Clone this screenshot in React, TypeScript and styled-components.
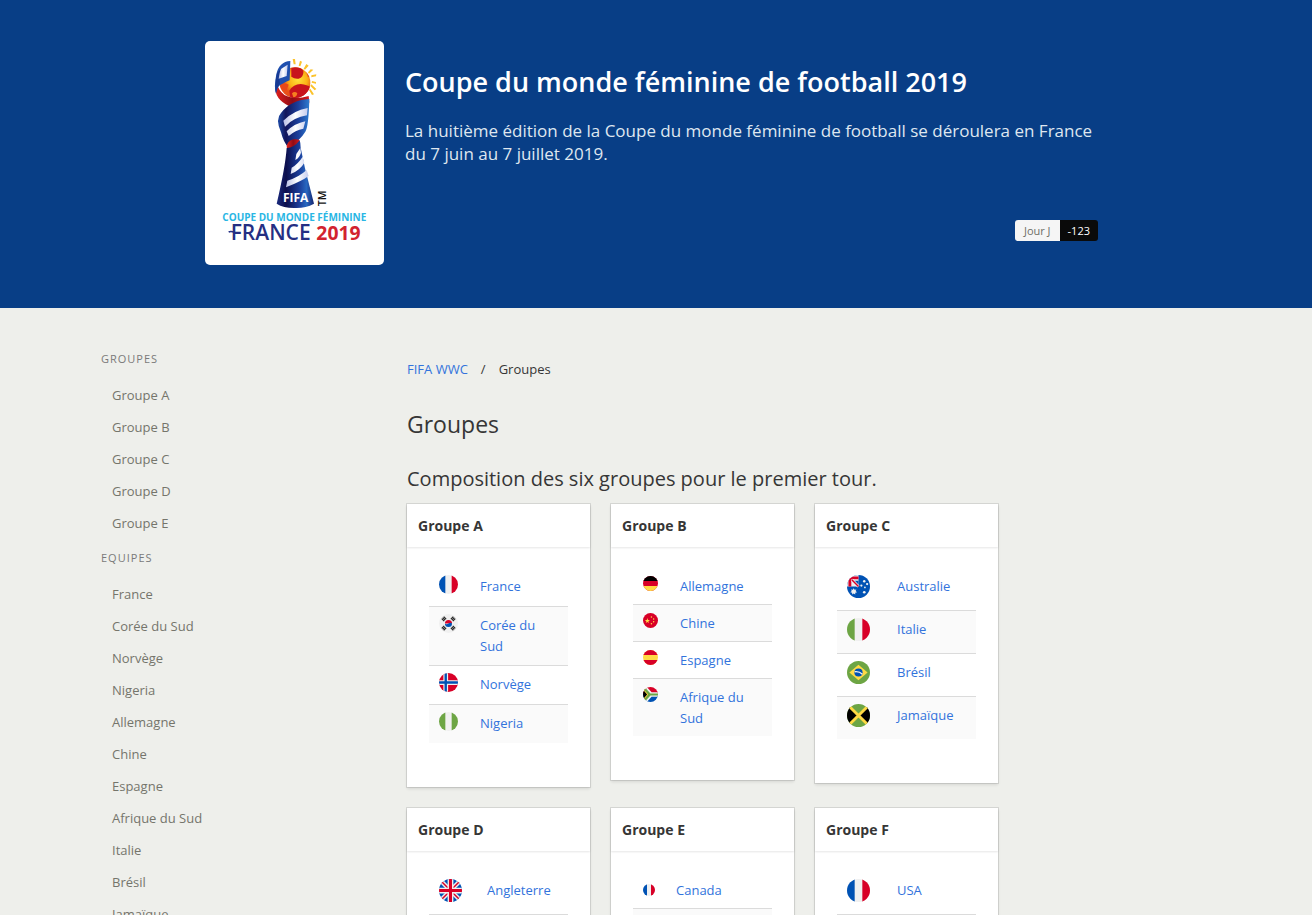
import React from "react";
import styled, { createGlobalStyle } from "styled-components";

const GlobalStyle = createGlobalStyle`
  *, *::before, *::after { box-sizing: border-box; }
  html { background: #eeefeb; }
  body {
    margin: 0;
    font-family: "Segoe UI", "Open Sans", "Noto Sans", sans-serif;
    font-size: 14px;
    line-height: 21px;
    color: #363636;
  }
  h1, h2, h3, p, ul { margin: 0; padding: 0; font-weight: 400; }
  ul { list-style: none; }
  a { color: #3273dc; text-decoration: none; }
`;

const Hero = styled.header`
  background: #083e86;
  padding: 41px 20px 43px;
`;

const HeroInner = styled.div`
  max-width: 902px;
  margin: 0 auto;
  display: flex;
  gap: 21px;
`;

const LogoCard = styled.div`
  flex: none;
  width: 179px;
  height: 224px;
  background: #fff;
  border-radius: 5px;
  overflow: hidden;
  svg { display: block; }
`;

const HeroBody = styled.div`
  flex: 1;
  display: flex;
  flex-direction: column;
  padding: 24px 9px 24px 0;
`;

const Title = styled.h1`
  color: #fff;
  font-size: 27px;
  font-weight: 600;
  line-height: 34px;
`;

const Subtitle = styled.p`
  margin-top: 20px;
  color: #dfe7f0;
  font-size: 17px;
  line-height: 23px;
`;

const Countdown = styled.div`
  align-self: flex-end;
  margin-top: auto;
  display: flex;
  border-radius: 3px;
  overflow: hidden;
`;

const Tag = styled.span<{ $dark?: boolean }>`
  padding: 0 ${(p) => (p.$dark ? 8 : 9)}px;
  font-size: 11px;
  line-height: 21px;
  background: ${(p) => (p.$dark ? "#0a0a0a" : "#f5f5f5")};
  color: ${(p) => (p.$dark ? "#fff" : "#6f6f66")};
`;

const Page = styled.div`
  max-width: 1130px;
  margin: 0 auto;
  padding: 40px 10px 20px;
  display: flex;
`;

const Sidebar = styled.nav`
  flex: none;
  width: 306px;
`;

const MenuLabel = styled.h2`
  font-size: 11px;
  line-height: 22px;
  letter-spacing: 1px;
  text-transform: uppercase;
  color: #7a7a7a;
`;

const MenuList = styled.ul`
  padding: 9px 0 8px;
`;

const MenuLink = styled.a`
  display: block;
  padding: 0 11px;
  font-size: 13px;
  line-height: 32px;
  color: #75756b;
`;

const Main = styled.main`
  flex: 1;
  min-width: 0;
`;

const Breadcrumb = styled.nav`
  margin-top: 11px;
  display: flex;
  gap: 13px;
  font-size: 13px;
`;

const Heading = styled.h2`
  margin-top: 28px;
  font-size: 23px;
  line-height: 33px;
`;

const Lead = styled.p`
  margin-top: 23px;
  font-size: 20px;
  line-height: 30px;
`;

const Cards = styled.div`
  margin-top: 10px;
  max-width: 591px;
  display: grid;
  grid-template-columns: repeat(3, minmax(0, 1fr));
  align-items: start;
  gap: 21px;
`;

const Card = styled.section`
  background: #fff;
  box-shadow: 0 2px 3px rgba(10, 10, 10, 0.1), 0 0 0 1px rgba(10, 10, 10, 0.1);
`;

const CardTitle = styled.h3`
  padding: 11px;
  font-size: 14px;
  font-weight: 700;
  line-height: 21px;
  box-shadow: 0 1px 2px rgba(10, 10, 10, 0.1);
`;

const CardBody = styled.div`
  padding: 21px 22px 44px;
`;

const Table = styled.table`
  width: 100%;
  border-collapse: separate;
  border-spacing: 0;
  table-layout: fixed;
  tr:nth-child(even) { background: #fafafa; }
  tr:not(:last-child) td { border-bottom: 1px solid #dbdbdb; }
`;

const FlagCell = styled.td<{ $width: number; $top: number; $height: number }>`
  box-sizing: content-box;
  width: ${(p) => p.$width - 10}px;
  height: ${(p) => p.$height - p.$top}px;
  padding: ${(p) => p.$top}px 0 0 10px;
  vertical-align: top;
  svg { display: block; border-radius: 50%; }
`;

const NameCell = styled.td<{ $bottom: number }>`
  padding: 8px 10px ${(p) => p.$bottom}px;
  vertical-align: top;
  font-size: 13px;
`;

const BLUE = "#0052b4";
const RED = "#d80027";
const GREEN = "#6da544";
const YELLOW = "#ffda44";
const WHITE = "#f0f0f0";

const bars = (a: string, b: string, c: string) => (
  <>
    <rect width="24" height="24" fill={b} />
    <rect width="8" height="24" fill={a} />
    <rect x="16" width="8" height="24" fill={c} />
  </>
);

const bands = (a: string, b: string, c: string) => (
  <>
    <rect width="24" height="24" fill={b} />
    <rect width="24" height="8" fill={a} />
    <rect y="16" width="24" height="8" fill={c} />
  </>
);

const flags: Record<string, React.ReactNode> = {
  fr: bars(BLUE, WHITE, RED),
  it: bars(GREEN, WHITE, RED),
  ng: bars(GREEN, WHITE, GREEN),
  de: bands("#000", RED, YELLOW),
  es: bands(RED, YELLOW, RED),
  nl: bands("#a2001d", WHITE, BLUE),
  ar: bands("#338af3", WHITE, "#338af3"),
  kr: (
    <>
      <rect width="24" height="24" fill={WHITE} />
      <path d="M7.500 12a4.500 4.500 0 0 1 9 0z" fill={RED} />
      <path d="M7.500 12a4.500 4.500 0 0 0 9 0q-2-2-4.500 0t-4.500 0z" fill={BLUE} />
      <g stroke="#222" strokeWidth="4.400" strokeDasharray="1.400 .4">
        <path d="M4.500 8L8 4.500M16 4.500L19.500 8M4.500 16L8 19.500M16 19.500l3.500-3.500" />
      </g>
    </>
  ),
  no: (
    <>
      <rect width="24" height="24" fill={RED} />
      <path d="M8.500 0v24M0 12h24" stroke={WHITE} strokeWidth="6" />
      <path d="M8.500 0v24M0 12h24" stroke={BLUE} strokeWidth="3" />
    </>
  ),
  cn: (
    <>
      <rect width="24" height="24" fill={RED} />
      <path d="M7 8l1 3h3.200l-2.600 2 1 3L7 14.200 4.400 16l1-3-2.600-2H6z" fill={YELLOW} />
      <g fill={YELLOW}>
        <circle cx="13.500" cy="6.500" r="1.200" />
        <circle cx="17" cy="9.500" r="1.200" />
        <circle cx="17" cy="14" r="1.200" />
        <circle cx="13.500" cy="17" r="1.200" />
      </g>
    </>
  ),
  za: (
    <>
      <rect width="24" height="12" fill={RED} />
      <rect y="12" width="24" height="12" fill={BLUE} />
      <path d="M2 1l10 11L2 23M11 12h13" stroke={WHITE} strokeWidth="7.500" fill="none" />
      <path d="M0 1l10 11L0 23z" fill="#000" />
      <path d="M0 3l8 9-8 9" stroke={YELLOW} strokeWidth="2" fill="none" />
      <path d="M1 1l10 11L1 23M11 12h13" stroke={GREEN} strokeWidth="3.500" fill="none" />
    </>
  ),
  au: (
    <>
      <rect width="24" height="24" fill={BLUE} />
      <rect width="12" height="12" fill={WHITE} />
      <path d="M0 3h12M3 0v12" stroke={RED} strokeWidth="3" />
      <path d="M6 6h6v6z" fill={BLUE} />
      <path d="M5 5l7 7" stroke={WHITE} strokeWidth="3" />
      <path d="M5 5l7 7" stroke={RED} strokeWidth="1.500" />
      <g fill={WHITE}>
        <path d="M7 13.800l.9 1.700 1.900-.4-.8 1.700 1.500 1.200-1.900.4v2L7 19.200l-1.600 1.200v-2l-1.900-.4L5 16.800l-.8-1.700 1.900.4z" />
        <circle cx="18" cy="6.500" r="1.300" />
        <circle cx="15" cy="11" r="1.200" />
        <circle cx="21" cy="9.500" r="1.200" />
        <circle cx="18.700" cy="13" r=".9" />
        <circle cx="18" cy="18" r="1.400" />
      </g>
    </>
  ),
  br: (
    <>
      <rect width="24" height="24" fill={GREEN} />
      <path d="M12 4l9.500 8L12 20l-9.500-8z" fill={YELLOW} />
      <circle cx="12" cy="12" r="4.300" fill={BLUE} />
      <path d="M8 11.200q5-.6 8 2.600" stroke={WHITE} strokeWidth="1.400" fill="none" />
    </>
  ),
  jm: (
    <>
      <rect width="24" height="24" fill={GREEN} />
      <path d="M0 0l12 12L0 24zM24 0L12 12l12 12z" fill="#000" />
      <path d="M2 2l20 20M22 2L2 22" stroke={YELLOW} strokeWidth="3" />
    </>
  ),
  gb: (
    <>
      <rect width="24" height="24" fill={BLUE} />
      <path d="M0 0l24 24M24 0L0 24" stroke={WHITE} strokeWidth="4.500" />
      <path d="M0 0l24 24M24 0L0 24" stroke={RED} strokeWidth="1.500" />
      <path d="M12 0v24M0 12h24" stroke={WHITE} strokeWidth="6" />
      <path d="M12 0v24M0 12h24" stroke={RED} strokeWidth="3.200" />
    </>
  ),
};

interface Group {
  name: string;
  flagSize: number;
  flagTop: number;
  flagWidth: number;
  rowHeight: number;
  teams: [string, string][];
}

const groups: Group[] = [
  {
    name: "Groupe A", flagSize: 19, flagTop: 7, flagWidth: 41, rowHeight: 38,
    teams: [["fr", "France"], ["kr", "Corée du Sud"], ["no", "Norvège"], ["ng", "Nigeria"]],
  },
  {
    name: "Groupe B", flagSize: 15, flagTop: 8, flagWidth: 37, rowHeight: 36,
    teams: [["de", "Allemagne"], ["cn", "Chine"], ["es", "Espagne"], ["za", "Afrique du Sud"]],
  },
  {
    name: "Groupe C", flagSize: 23, flagTop: 7, flagWidth: 50, rowHeight: 42,
    teams: [["au", "Australie"], ["it", "Italie"], ["br", "Brésil"], ["jm", "Jamaïque"]],
  },
  {
    name: "Groupe D", flagSize: 23, flagTop: 7, flagWidth: 48, rowHeight: 42,
    teams: [["gb", "Angleterre"], ["ar", "Argentine"]],
  },
  {
    name: "Groupe E", flagSize: 12, flagTop: 12, flagWidth: 33, rowHeight: 36,
    teams: [["fr", "Canada"], ["nl", "Pays-Bas"]],
  },
  {
    name: "Groupe F", flagSize: 23, flagTop: 7, flagWidth: 50, rowHeight: 42,
    teams: [["fr", "USA"], ["fr", "Suède"]],
  },
];

const menus = [
  { label: "Groupes", items: ["Groupe A", "Groupe B", "Groupe C", "Groupe D", "Groupe E"] },
  {
    label: "Equipes",
    items: [
      "France", "Corée du Sud", "Norvège", "Nigeria", "Allemagne", "Chine",
      "Espagne", "Afrique du Sud", "Italie", "Brésil", "Jamaïque",
    ],
  },
];

const Trophy = () => (
  <svg width="179" height="224" viewBox="15 15 537 672" role="img" aria-label="FIFA Coupe du monde féminine France 2019">
    <defs>
      <linearGradient id="base" x1="0" x2="1">
        <stop offset="0" stopColor="#1c2c80" />
        <stop offset=".25" stopColor="#0c0e4c" />
        <stop offset=".6" stopColor="#1b3c98" />
        <stop offset=".8" stopColor="#2868c0" />
        <stop offset="1" stopColor="#15246e" />
      </linearGradient>
      <linearGradient id="band" x1="0" x2="1">
        <stop offset="0" stopColor="#1f4ba6" />
        <stop offset=".25" stopColor="#12155a" />
        <stop offset=".65" stopColor="#1c3f9c" />
        <stop offset="1" stopColor="#2e7cd0" />
      </linearGradient>
      <linearGradient id="stripe" x1="0" x2="1">
        <stop offset="0" stopColor="#b9bfe6" />
        <stop offset=".5" stopColor="#ffffff" />
        <stop offset="1" stopColor="#c6cdee" />
      </linearGradient>
      <radialGradient id="ball" cx=".6" cy=".4">
        <stop offset="0" stopColor="#ffe23a" />
        <stop offset=".6" stopColor="#fbb216" />
        <stop offset="1" stopColor="#e8501a" />
      </radialGradient>
      <linearGradient id="ribbon" x1="0" x2="1">
        <stop offset="0" stopColor="#e0201c" />
        <stop offset=".5" stopColor="#8e0c16" />
        <stop offset="1" stopColor="#d41a1c" />
      </linearGradient>
      <clipPath id="ballClip"><circle cx="285" cy="140" r="46" /></clipPath>
    </defs>
    <g fill="#fbc32c">
      <path d="M278 69l7 0 2 16-6 0zM300 74l6 3-5 14-5-2zM319 84l7 5-11 12-4-3zM332 100l8 1-13 12-3-4zM334 118l15-3-1 6-14 3zM336 135l12 3v5l-13-3zM334 145l15 14-5 4-13-13zM331 158l11 17-6 2-9-15z" />
    </g>
    <circle cx="285" cy="140" r="46" fill="url(#ball)" />
    <g clipPath="url(#ballClip)">
      <path d="M274 96q24-8 36 8 2 18-14 24-12 2-22-6z" fill="#c8141c" />
      <path d="M268 164q12-20 34-20 20 2 30 10l-10 40h-50z" fill="#c8141c" />
      <path d="M240 148q14-12 26-2l-6 16q-10 4-18-6zM316 98l16 22-8 4z" fill="#e8481a" />
      <path d="M276 172q8-8 16 0-2 12-12 12z" fill="#f58020" />
    </g>
    <path d="M234 152q8 20 26 28 26 12 66 0l2 18-2 10q-30 2-46 8-52-20-54-56z" fill="url(#ribbon)" />
    <path d="M271 75q-34 2-42 40-8 40-1 58 2-14 8-22 10-8 33-18z" fill="#1f4fae" />
    <path d="M231 112q-8 36-3 58 2-12 8-20l4-8q-4-14 2-44z" fill="#173a94" />
    <path d="M243 99l20-13-3 34-24 8q2-18 7-29z" fill="url(#stripe)" />
    <path d="M327 189q-56 4-84 42-18 18 0 58 8 32 23 46 34-22 50-48 10-16 12-98z" fill="url(#band)" />
    <path d="M250 254q30-30 73-38l-2 22q-40 6-66 34zM260 286q24-24 56-30l-6 22q-24 4-44 22z" fill="url(#stripe)" />
    <path d="M260 334q0-18 20-24 14-2 19 3l-2 10q-16 14-34 15z" fill="url(#ribbon)" />
    <path d="M299 313q3 8 3 22l13 62 27 106q-26 14-56 13-34 1-56-13 26-110 30-167 22 0 39-23z" fill="url(#base)" />
    <path d="M301 336l2 14q-4 14-17 22l3-18zM308 362l5 18q-12 22-41 34l3-19q20-12 33-33zM320 402l6 18q-22 16-68 34l4-20q34-10 58-32z" fill="url(#stripe)" />
    <g fontFamily="Open Sans, Noto Sans, sans-serif">
      <text x="287" y="499" fontSize="36" fontWeight="700" textAnchor="middle" fill="#fff">FIFA</text>
      <text transform="translate(377 511) rotate(-90)" fontSize="32" fontWeight="600" fill="#111">TM</text>
      <text x="283" y="555" fontSize="30" fontWeight="700" textAnchor="middle" fill="#29b6e4">COUPE DU MONDE FÉMININE</text>
      <text x="92" y="613" fontSize="63" fontWeight="600" fill="#252f83">FRANCE</text>
      <text x="349" y="613" fontSize="58" fontWeight="700" fill="#d2232f">2019</text>
    </g>
    <path d="M86 588q8-4 18 2" stroke="#252f83" strokeWidth="5" fill="none" />
  </svg>
);

const GroupCard = ({ group }: { group: Group }) => (
  <Card>
    <CardTitle>{group.name}</CardTitle>
    <CardBody>
      <Table aria-label={group.name}>
        <tbody>
          {group.teams.map(([code, team]) => (
            <tr key={team}>
              <FlagCell $width={group.flagWidth} $top={group.flagTop} $height={group.rowHeight}>
                <svg width={group.flagSize} height={group.flagSize} viewBox="0 0 24 24" aria-hidden="true">
                  {flags[code]}
                </svg>
              </FlagCell>
              <NameCell $bottom={group.rowHeight > 36 ? 8 : 7}><a href="#equipe">{team}</a></NameCell>
            </tr>
          ))}
        </tbody>
      </Table>
    </CardBody>
  </Card>
);

export default function App() {
  return (
    <>
      <GlobalStyle />
      <Hero>
        <HeroInner>
          <LogoCard><Trophy /></LogoCard>
          <HeroBody>
            <Title>Coupe du monde féminine de football 2019</Title>
            <Subtitle>
              La huitième édition de la Coupe du monde féminine de football se déroulera en France du 7 juin au 7
              juillet 2019.
            </Subtitle>
            <Countdown>
              <Tag>Jour J</Tag>
              <Tag $dark>-123</Tag>
            </Countdown>
          </HeroBody>
        </HeroInner>
      </Hero>
      <Page>
        <Sidebar aria-label="Menu">
          {menus.map((menu) => (
            <React.Fragment key={menu.label}>
              <MenuLabel>{menu.label}</MenuLabel>
              <MenuList>
                {menu.items.map((item) => (
                  <li key={item}><MenuLink href="#menu">{item}</MenuLink></li>
                ))}
              </MenuList>
            </React.Fragment>
          ))}
        </Sidebar>
        <Main>
          <Breadcrumb aria-label="Fil d'Ariane">
            <a href="#accueil">FIFA WWC</a>
            <span>/</span>
            <span>Groupes</span>
          </Breadcrumb>
          <Heading>Groupes</Heading>
          <Lead>Composition des six groupes pour le premier tour.</Lead>
          <Cards>
            {groups.map((group) => <GroupCard key={group.name} group={group} />)}
          </Cards>
        </Main>
      </Page>
    </>
  );
}
